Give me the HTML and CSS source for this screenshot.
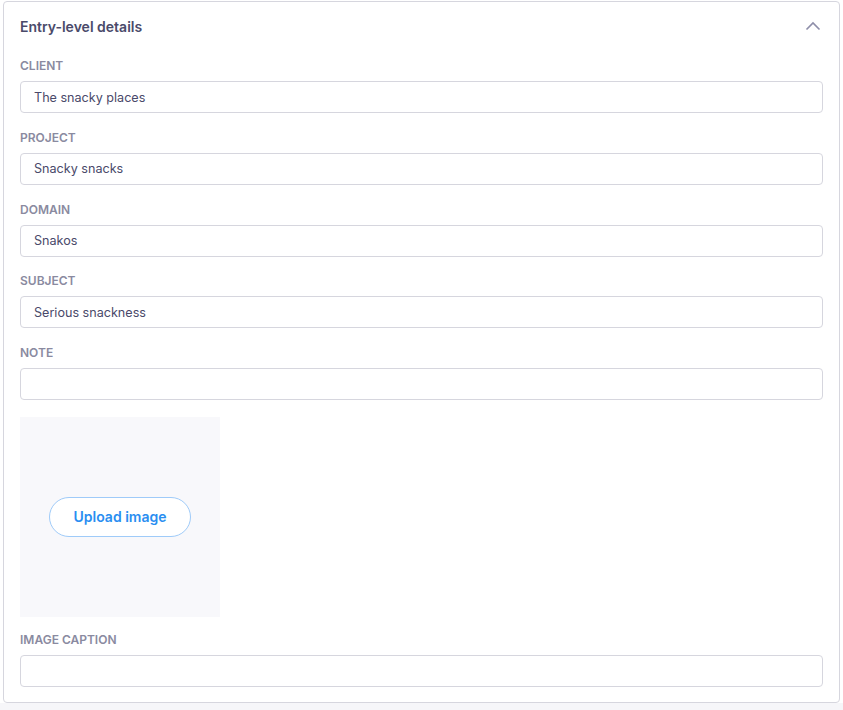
FILE: index.html
```html
<!DOCTYPE html>
<html lang="en">
<head>
<meta charset="UTF-8">
<meta name="viewport" content="width=device-width, initial-scale=1.0">
<title>Entry-level details</title>
<link rel="stylesheet" href="styles.css">
</head>
<body>
  <div class="page">
    <div class="details-card">
      <div class="card-header">
        <h2>Entry-level details</h2>
        <button class="toggle-button" aria-label="Collapse">
          <svg width="16" height="10" viewBox="0 0 16 10" fill="none">
            <path d="M1.5 8.5 L8 2 L14.5 8.5" stroke="#8e8ea9" stroke-width="1.6"/>
          </svg>
        </button>
      </div>
      <div class="field">
        <label for="client">Client</label>
        <input type="text" id="client" class="text-input" value="The snacky places">
      </div>
      <div class="field">
        <label for="project">Project</label>
        <input type="text" id="project" class="text-input" value="Snacky snacks">
      </div>
      <div class="field">
        <label for="domain">Domain</label>
        <input type="text" id="domain" class="text-input" value="Snakos">
      </div>
      <div class="field">
        <label for="subject">Subject</label>
        <input type="text" id="subject" class="text-input" value="Serious snackness">
      </div>
      <div class="field">
        <label for="note">Note</label>
        <input type="text" id="note" class="text-input" value="">
      </div>
      <div class="upload-box">
        <button class="upload-button">Upload image</button>
      </div>
      <div class="field">
        <label for="caption">Image caption</label>
        <input type="text" id="caption" class="text-input" value="">
      </div>
    </div>
  </div>
</body>
</html>
```

FILE: styles.css
```css
html {
  background-color: #f6f6f9;
}
body {
  font-family: Inter, "Noto Sans", sans-serif;
  margin: 0;
  padding: 0;
}
.page {
  background-color: #fff;
  padding: 1px 3px 0 3px;
}
.details-card {
  border: 1px solid #d6d6de;
  border-radius: 4px;
  padding: 14px 16px 15px 16px;
  background-color: #fff;
}
.card-header {
  display: flex;
  justify-content: space-between;
  align-items: center;
  height: 20px;
  margin-bottom: 22px;
}
.card-header h2 {
  margin: 0;
  font-size: 14px;
  font-weight: 600;
  color: #4a4a6a;
}
.toggle-button {
  background: none;
  border: none;
  padding: 0;
  margin-right: 2px;
  cursor: pointer;
  display: flex;
}
.field {
  display: flex;
  flex-direction: column;
  margin-bottom: 16.75px;
}
.field:last-child {
  margin-bottom: 0;
}
.field label {
  font-size: 12px;
  line-height: 16px;
  font-weight: 600;
  text-transform: uppercase;
  color: #8a8aa0;
  margin-bottom: 7px;
}
.text-input {
  height: 32px;
  box-sizing: border-box;
  border: 1px solid #d6d6de;
  border-radius: 4px;
  padding: 0 13px;
  font-family: inherit;
  font-size: 12.6px;
  color: #4a4a6a;
}
.upload-box {
  width: 200px;
  height: 200px;
  background-color: #f8f8fb;
  display: flex;
  align-items: center;
  justify-content: center;
  margin-bottom: 15.5px;
}
.upload-button {
  background-color: #fff;
  border: 1px solid #9fcbf9;
  color: #2a8ef1;
  font-family: inherit;
  font-size: 14px;
  font-weight: 600;
  width: 142px;
  height: 40px;
  border-radius: 20px;
  cursor: pointer;
}
```
